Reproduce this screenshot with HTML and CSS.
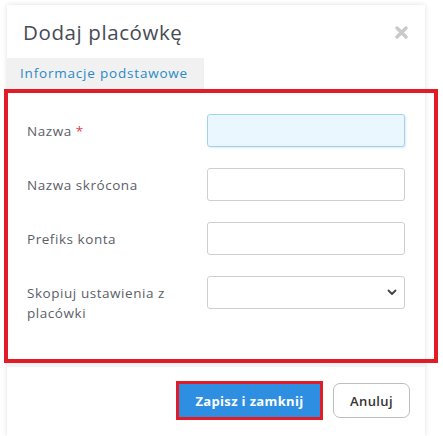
FILE: index.html
```html
<!DOCTYPE html>
<html lang="pl">
<head>
  <meta charset="UTF-8">
  <meta name="viewport" content="width=device-width, initial-scale=1.0">
  <title>Dodaj placówkę</title>
  <link rel="stylesheet" href="styles.css">
</head>
<body>
  <div class="page">
    <div class="modal">
      <!-- Header -->
      <div class="modal-header">
        <h1 class="modal-title">Dodaj placówkę</h1>
        <span class="close">
          <svg width="13" height="13" viewBox="0 0 13 13">
            <path d="M2 2 L11 11 M11 2 L2 11" stroke="#c9c9c9" stroke-width="3.4" stroke-linecap="round"/>
          </svg>
        </span>
      </div>

      <!-- Tabs -->
      <div class="tabs">
        <div class="tab active">Informacje podstawowe</div>
      </div>

      <!-- Form -->
      <div class="form-box">
        <div class="form-row">
          <label class="form-label">Nazwa <span class="req">*</span></label>
          <div class="input focused"></div>
        </div>
        <div class="form-row">
          <label class="form-label">Nazwa skrócona</label>
          <div class="input"></div>
        </div>
        <div class="form-row">
          <label class="form-label">Prefiks konta</label>
          <div class="input"></div>
        </div>
        <div class="form-row">
          <label class="form-label">Skopiuj ustawienia z placówki</label>
          <div class="input select">
            <svg width="10" height="7" viewBox="0 0 10 7">
              <path d="M1.5 1.5 L5 5 L8.5 1.5" fill="none" stroke="#444" stroke-width="1.8" stroke-linecap="round" stroke-linejoin="round"/>
            </svg>
          </div>
        </div>
      </div>
      <div class="tab-bottom"></div>

      <!-- Footer -->
      <div class="modal-footer">
        <button class="btn btn-primary">Zapisz i zamknij</button>
        <button class="btn btn-default">Anuluj</button>
      </div>
    </div>
  </div>
</body>
</html>
```

FILE: styles.css
```css
body {
  margin: 0;
  background-color: #fff;
  font-family: "Open Sans", Arial, sans-serif;
  color: #5b6068;
}

.page {
  padding: 5px 18px 0 7px;
}

.modal {
  background-color: #fff;
  height: 431px;
  box-shadow: 0 0 5px rgba(0, 0, 0, 0.13);
}

.modal-header {
  height: 53px;
  display: flex;
  align-items: center;
  justify-content: space-between;
  padding: 0 17px 0 16px;
}

.modal-title {
  margin: 0;
  font-size: 20.5px;
  font-weight: 400;
  color: #464b55;
  letter-spacing: 0.6px;
}

.close {
  display: flex;
  margin-top: 1px;
}

.tabs {
  display: flex;
  height: 31px;
}

.tab {
  width: 184px;
  padding-left: 13px;
  background-color: #f1f1f2;
  color: #2b8ac6;
  font-size: 13.5px;
  letter-spacing: 0.8px;
  line-height: 31px;
  white-space: nowrap;
}

/* red outlined box sticks out past the modal edges */
.form-box {
  margin: 0 -13px 0 -3px;
  border: 4px solid #e21c27;
  padding: 21px 29px 36px 19px;
  display: flex;
  flex-direction: column;
  gap: 21px;
}

.form-row {
  display: flex;
  align-items: flex-start;
}

.form-label {
  width: 180px;
  padding-top: 7px;
  padding-right: 14px;
  box-sizing: border-box;
  font-size: 13.5px;
  letter-spacing: 0.55px;
  line-height: 20px;
  color: #5b6068;
}

.req {
  color: #e0404a;
}

.input {
  flex: 1;
  height: 33px;
  box-sizing: border-box;
  border: 1px solid #cfcfcf;
  border-radius: 3px;
  background-color: #fff;
}

.input.focused {
  background-color: #ebf7fe;
  border-color: #a3d2ea;
  box-shadow: 1px 1px 2px rgba(120, 170, 200, 0.25);
}

.select {
  display: flex;
  align-items: center;
  justify-content: flex-end;
  padding-right: 7px;
}

.tab-bottom {
  height: 4px;
  background-color: #f3f3f4;
}

.modal-footer {
  display: flex;
  justify-content: flex-end;
  align-items: center;
  gap: 10px;
  padding: 14px 15px 0 0;
}

.btn {
  font-family: "Open Sans", Arial, sans-serif;
  font-size: 13px;
  cursor: pointer;
  border-radius: 3px;
}

.btn-primary {
  width: 147px;
  height: 39px;
  background-color: #2e8fe2;
  color: #fff;
  font-weight: 700;
  letter-spacing: 0.35px;
  border: 3px solid #e21c27;
  border-radius: 0;
}

.btn-default {
  width: 77px;
  height: 35px;
  background-color: #fff;
  color: #333;
  font-weight: 600;
  letter-spacing: 0.4px;
  border: 1px solid #bdbdbd;
  border-radius: 7px;
}
```
